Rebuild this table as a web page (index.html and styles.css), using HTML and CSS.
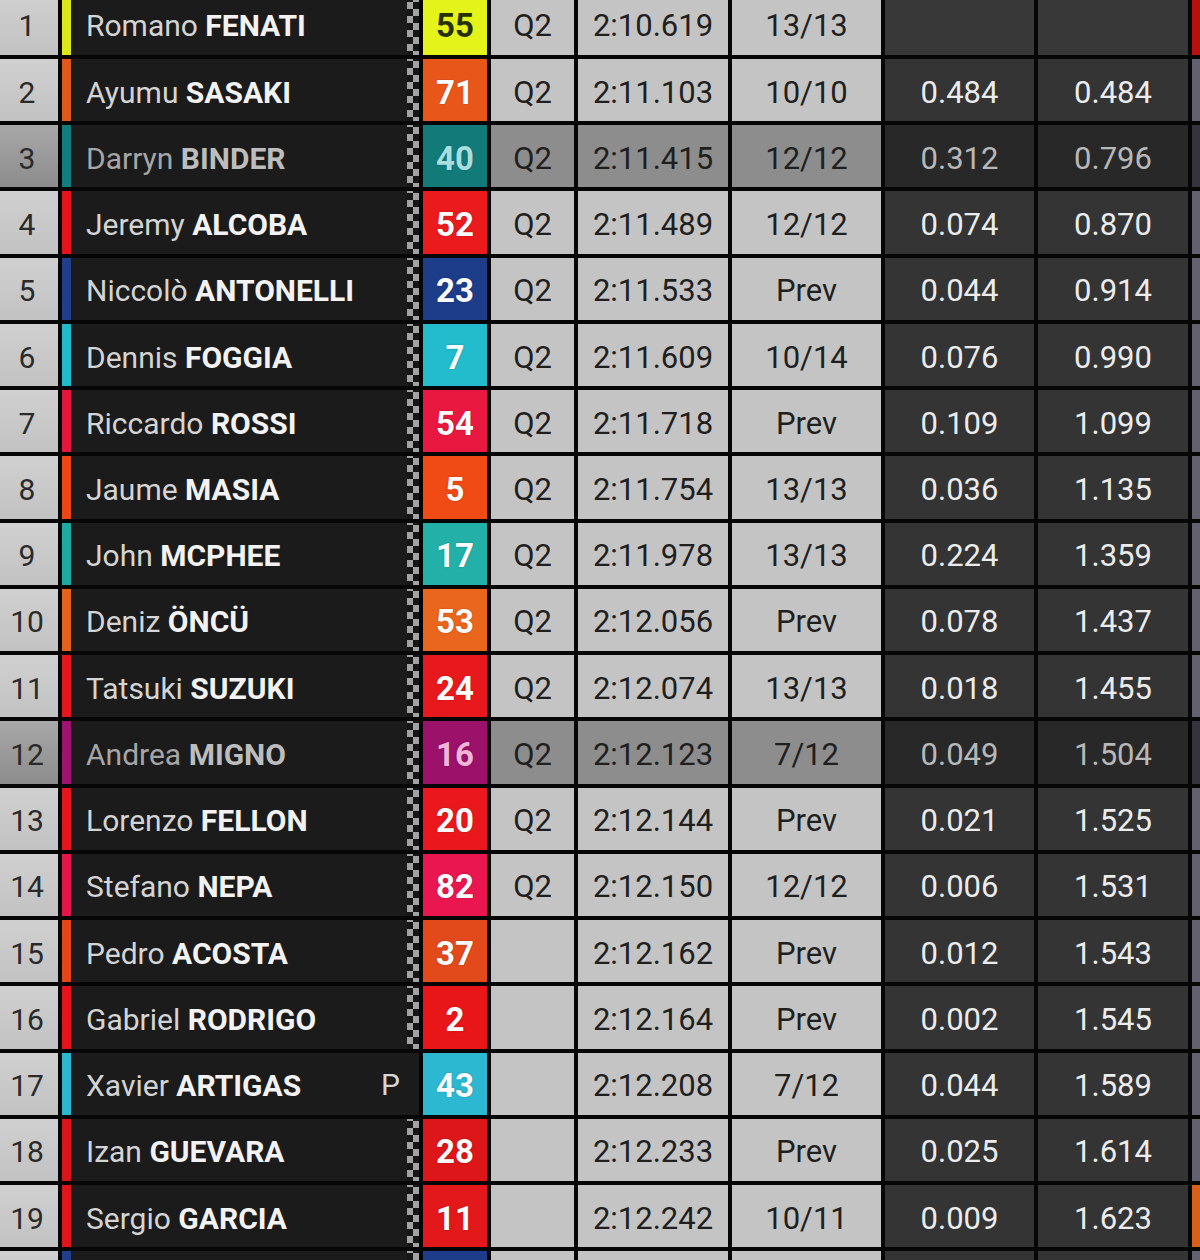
FILE: index.html
```html
<!DOCTYPE html>
<html lang="en">
<head>
<meta charset="utf-8">
<title>Qualifying classification</title>
<link rel="stylesheet" href="styles.css">
</head>
<body>
<div class="board">
  <div class="row">
    <div class="pos">1</div>
    <div class="name" style="--team:#dbe81a"><span class="rider">Romano <b>FENATI</b></span><span class="flag"></span></div>
    <div class="num dark" style="--bib:#e4f31a">55</div>
    <div class="cell">Q2</div><div class="cell">2:10.619</div><div class="cell">13/13</div>
    <div class="gap empty"></div><div class="gap empty"></div>
    <div class="edge red"></div>
  </div>
  <div class="row">
    <div class="pos">2</div>
    <div class="name" style="--team:#e0581a"><span class="rider">Ayumu <b>SASAKI</b></span><span class="flag"></span></div>
    <div class="num" style="--bib:#e9561a">71</div>
    <div class="cell">Q2</div><div class="cell">2:11.103</div><div class="cell">10/10</div>
    <div class="gap">0.484</div><div class="gap">0.484</div>
    <div class="edge"></div>
  </div>
  <div class="row dim">
    <div class="pos">3</div>
    <div class="name" style="--team:#127d7e"><span class="rider">Darryn <b>BINDER</b></span><span class="flag"></span></div>
    <div class="num" style="--bib:#137a7a;--ink:#a8dede">40</div>
    <div class="cell">Q2</div><div class="cell">2:11.415</div><div class="cell">12/12</div>
    <div class="gap">0.312</div><div class="gap">0.796</div>
    <div class="edge"></div>
  </div>
  <div class="row">
    <div class="pos">4</div>
    <div class="name" style="--team:#e3141a"><span class="rider">Jeremy <b>ALCOBA</b></span><span class="flag"></span></div>
    <div class="num" style="--bib:#ea1a1d">52</div>
    <div class="cell">Q2</div><div class="cell">2:11.489</div><div class="cell">12/12</div>
    <div class="gap">0.074</div><div class="gap">0.870</div>
    <div class="edge"></div>
  </div>
  <div class="row">
    <div class="pos">5</div>
    <div class="name" style="--team:#1f3f8c"><span class="rider">Niccolò <b>ANTONELLI</b></span><span class="flag"></span></div>
    <div class="num" style="--bib:#1d3d8b">23</div>
    <div class="cell">Q2</div><div class="cell">2:11.533</div><div class="cell">Prev</div>
    <div class="gap">0.044</div><div class="gap">0.914</div>
    <div class="edge"></div>
  </div>
  <div class="row">
    <div class="pos">6</div>
    <div class="name" style="--team:#22b9cb"><span class="rider">Dennis <b>FOGGIA</b></span><span class="flag"></span></div>
    <div class="num" style="--bib:#22bccd">7</div>
    <div class="cell">Q2</div><div class="cell">2:11.609</div><div class="cell">10/14</div>
    <div class="gap">0.076</div><div class="gap">0.990</div>
    <div class="edge"></div>
  </div>
  <div class="row">
    <div class="pos">7</div>
    <div class="name" style="--team:#e3173b"><span class="rider">Riccardo <b>ROSSI</b></span><span class="flag"></span></div>
    <div class="num" style="--bib:#e81840">54</div>
    <div class="cell">Q2</div><div class="cell">2:11.718</div><div class="cell">Prev</div>
    <div class="gap">0.109</div><div class="gap">1.099</div>
    <div class="edge"></div>
  </div>
  <div class="row">
    <div class="pos">8</div>
    <div class="name" style="--team:#ec4616"><span class="rider">Jaume <b>MASIA</b></span><span class="flag"></span></div>
    <div class="num" style="--bib:#f04a15">5</div>
    <div class="cell">Q2</div><div class="cell">2:11.754</div><div class="cell">13/13</div>
    <div class="gap">0.036</div><div class="gap">1.135</div>
    <div class="edge"></div>
  </div>
  <div class="row">
    <div class="pos">9</div>
    <div class="name" style="--team:#20a9a2"><span class="rider">John <b>MCPHEE</b></span><span class="flag"></span></div>
    <div class="num" style="--bib:#22b0a8">17</div>
    <div class="cell">Q2</div><div class="cell">2:11.978</div><div class="cell">13/13</div>
    <div class="gap">0.224</div><div class="gap">1.359</div>
    <div class="edge"></div>
  </div>
  <div class="row">
    <div class="pos">10</div>
    <div class="name" style="--team:#e5621c"><span class="rider">Deniz <b>ÖNCÜ</b></span><span class="flag"></span></div>
    <div class="num" style="--bib:#e9661c">53</div>
    <div class="cell">Q2</div><div class="cell">2:12.056</div><div class="cell">Prev</div>
    <div class="gap">0.078</div><div class="gap">1.437</div>
    <div class="edge"></div>
  </div>
  <div class="row">
    <div class="pos">11</div>
    <div class="name" style="--team:#e3181c"><span class="rider">Tatsuki <b>SUZUKI</b></span><span class="flag"></span></div>
    <div class="num" style="--bib:#e8191d">24</div>
    <div class="cell">Q2</div><div class="cell">2:12.074</div><div class="cell">13/13</div>
    <div class="gap">0.018</div><div class="gap">1.455</div>
    <div class="edge"></div>
  </div>
  <div class="row dim">
    <div class="pos">12</div>
    <div class="name" style="--team:#9c1470"><span class="rider">Andrea <b>MIGNO</b></span><span class="flag"></span></div>
    <div class="num" style="--bib:#9c1169;--ink:#f0b4d8">16</div>
    <div class="cell">Q2</div><div class="cell">2:12.123</div><div class="cell">7/12</div>
    <div class="gap">0.049</div><div class="gap">1.504</div>
    <div class="edge"></div>
  </div>
  <div class="row">
    <div class="pos">13</div>
    <div class="name" style="--team:#e3161c"><span class="rider">Lorenzo <b>FELLON</b></span><span class="flag"></span></div>
    <div class="num" style="--bib:#ea181c">20</div>
    <div class="cell">Q2</div><div class="cell">2:12.144</div><div class="cell">Prev</div>
    <div class="gap">0.021</div><div class="gap">1.525</div>
    <div class="edge"></div>
  </div>
  <div class="row">
    <div class="pos">14</div>
    <div class="name" style="--team:#e3164a"><span class="rider">Stefano <b>NEPA</b></span><span class="flag"></span></div>
    <div class="num" style="--bib:#e91650">82</div>
    <div class="cell">Q2</div><div class="cell">2:12.150</div><div class="cell">12/12</div>
    <div class="gap">0.006</div><div class="gap">1.531</div>
    <div class="edge"></div>
  </div>
  <div class="row">
    <div class="pos">15</div>
    <div class="name" style="--team:#e24619"><span class="rider">Pedro <b>ACOSTA</b></span><span class="flag"></span></div>
    <div class="num" style="--bib:#e34a1b">37</div>
    <div class="cell"></div><div class="cell">2:12.162</div><div class="cell">Prev</div>
    <div class="gap">0.012</div><div class="gap">1.543</div>
    <div class="edge"></div>
  </div>
  <div class="row">
    <div class="pos">16</div>
    <div class="name" style="--team:#e3141a"><span class="rider">Gabriel <b>RODRIGO</b></span><span class="flag"></span></div>
    <div class="num" style="--bib:#e81519">2</div>
    <div class="cell"></div><div class="cell">2:12.164</div><div class="cell">Prev</div>
    <div class="gap">0.002</div><div class="gap">1.545</div>
    <div class="edge"></div>
  </div>
  <div class="row">
    <div class="pos">17</div>
    <div class="name" style="--team:#2cb6d0"><span class="rider">Xavier <b>ARTIGAS</b></span><span class="pen">P</span><span class="flag none"></span></div>
    <div class="num" style="--bib:#2db8d2">43</div>
    <div class="cell"></div><div class="cell">2:12.208</div><div class="cell">7/12</div>
    <div class="gap">0.044</div><div class="gap">1.589</div>
    <div class="edge"></div>
  </div>
  <div class="row">
    <div class="pos">18</div>
    <div class="name" style="--team:#d8161a"><span class="rider">Izan <b>GUEVARA</b></span><span class="flag"></span></div>
    <div class="num" style="--bib:#dc1619">28</div>
    <div class="cell"></div><div class="cell">2:12.233</div><div class="cell">Prev</div>
    <div class="gap">0.025</div><div class="gap">1.614</div>
    <div class="edge"></div>
  </div>
  <div class="row">
    <div class="pos">19</div>
    <div class="name" style="--team:#df171b"><span class="rider">Sergio <b>GARCIA</b></span><span class="flag"></span></div>
    <div class="num" style="--bib:#e2181b">11</div>
    <div class="cell"></div><div class="cell">2:12.242</div><div class="cell">10/11</div>
    <div class="gap">0.009</div><div class="gap">1.623</div>
    <div class="edge orange"></div>
  </div>
  <div class="row">
    <div class="pos"></div>
    <div class="name" style="--team:#1f3f8c"><span class="rider"></span><span class="flag"></span></div>
    <div class="num" style="--bib:#1d3d8b"></div>
    <div class="cell"></div><div class="cell"></div><div class="cell"></div>
    <div class="gap"></div><div class="gap"></div>
    <div class="edge"></div>
  </div>
</div>
</body>
</html>
```

FILE: styles.css
```css
html, body {
  margin: 0;
  padding: 0;
}

body {
  background: #060606;
  font-family: Roboto, "Liberation Sans", sans-serif;
  overflow: hidden;
}

.board {
  display: flex;
  flex-direction: column;
  gap: 4px;
  margin-top: -7.24px;
}

.row {
  display: grid;
  grid-template-columns: 58px 357px 64px 83px 150px 149px 149px 150px 8px;
  column-gap: 4px;
  height: 62.24px;
}

.pos,
.num,
.cell,
.gap {
  display: flex;
  align-items: center;
  justify-content: center;
  box-sizing: border-box;
  padding-top: 4px;
}

.pos {
  background: linear-gradient(180deg, #d0d0d0 0%, #c2c2c2 100%);
  color: #2a2a2a;
  font-size: 30px;
  padding-right: 4px;
}

.name {
  display: flex;
  align-items: stretch;
  background: #1b1b1b;
  border-left: 9px solid var(--team);
}

.rider {
  flex: 1;
  display: flex;
  align-items: center;
  padding: 4px 0 0 15px;
  font-size: 30px;
  color: #d4d4d4;
  white-space: pre;
}

.rider b {
  font-weight: 700;
  color: #f2f2f2;
}

.pen {
  display: flex;
  align-items: center;
  padding-top: 2px;
  margin-right: 7px;
  font-size: 30px;
  color: #d6d6d6;
}

.flag {
  width: 12px;
  background:
    conic-gradient(#a2a2a2 25%, #161616 0 50%, #a2a2a2 0 75%, #161616 0)
    0 2px / 12px 14px;
}

.flag.none {
  background: none;
}

.num {
  background: var(--bib);
  color: var(--ink, #fbfbfb);
  font-size: 33px;
  font-weight: 700;
  text-shadow: 0 0 2px rgba(0, 0, 0, 0.25);
}

.num.dark {
  color: #283000;
  text-shadow: none;
}

.cell {
  background: #c4c4c4;
  color: #1f1f1f;
  font-size: 31px;
}

.gap {
  background: #343434;
  color: #ececec;
  font-size: 31px;
}

.gap.empty {
  background: #383838;
}

.edge {
  background: #62626e;
}

.edge.red {
  background: #b80f0f;
}

.edge.orange {
  background: #d9601a;
}

/* dimmed (highlighted) rows */
.dim .pos {
  background: linear-gradient(180deg, #a8a8a8 0%, #8c8c8c 100%);
}

.dim .rider {
  color: #a6a6a6;
}

.dim .rider b {
  color: #bdbdbd;
}

.dim .cell {
  background: #8d8d8d;
}

.dim .gap {
  background: #282828;
  color: #b8b8b8;
}

.dim .edge {
  background: #34343c;
}
```
